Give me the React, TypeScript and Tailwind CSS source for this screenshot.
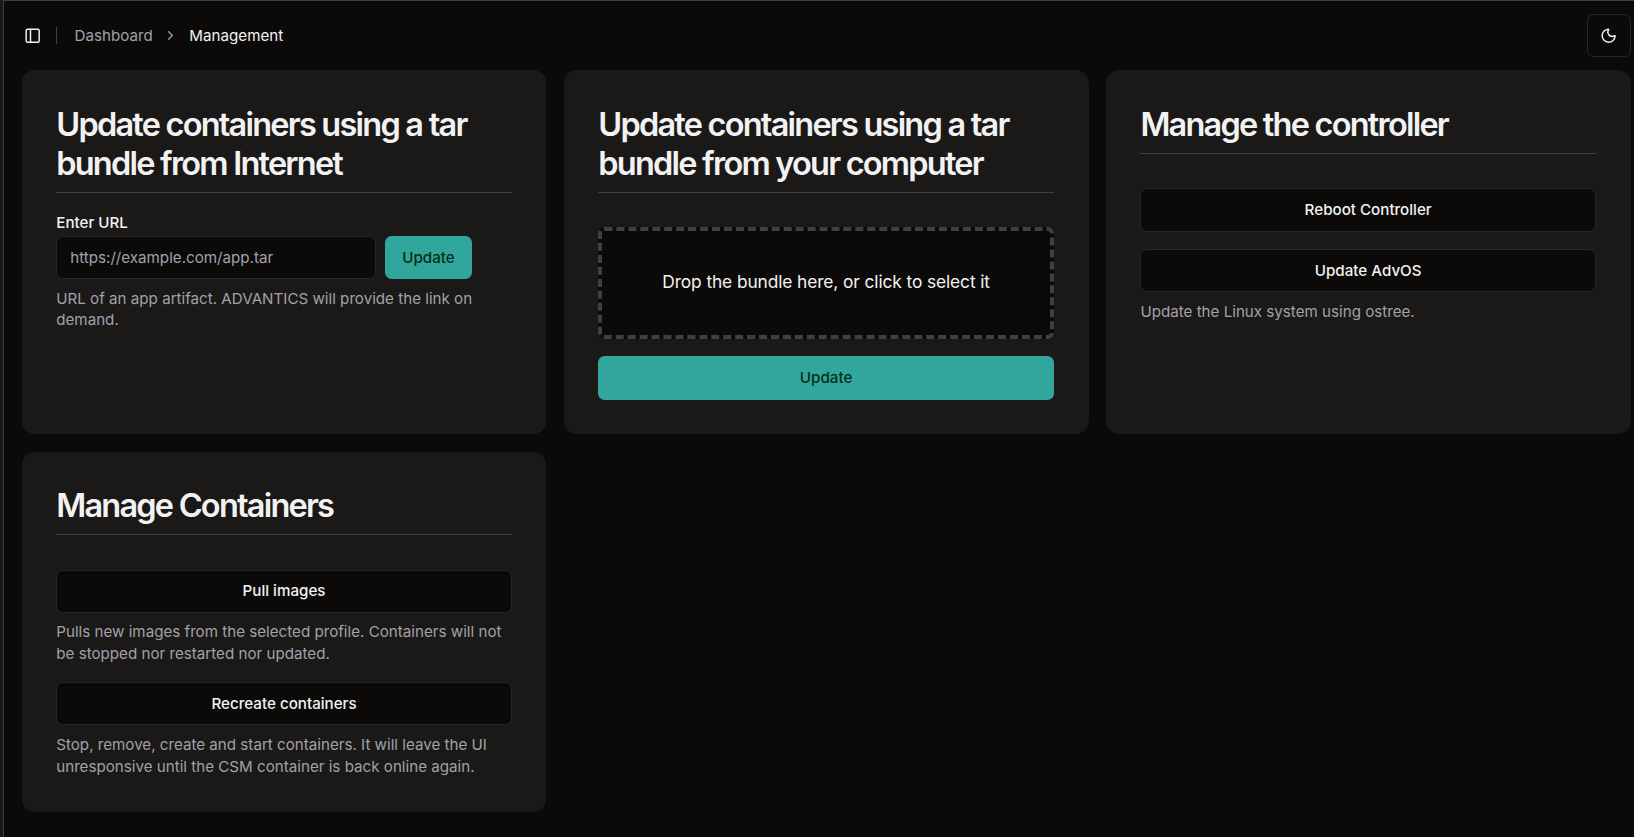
import type { ReactNode } from "react";
import { ChevronRight, Moon, PanelLeft } from "lucide-react";

function Card({ title, children }: { title: string; children: ReactNode }) {
  return (
    <section className="rounded-xl bg-[#1a1917] p-8">
      <h2 className="border-b border-[#3f3f46] pb-2 text-3xl leading-9 font-semibold tracking-[-0.0545em] text-[#f2f2f2]">
        {title}
      </h2>
      {children}
    </section>
  );
}

function OutlineButton({ children }: { children: ReactNode }) {
  return (
    <button className="flex h-10 w-full items-center justify-center rounded-md border border-[#27272a] bg-[#0c0a09] text-sm font-medium text-[#f2f2f2]">
      {children}
    </button>
  );
}

function Description({ children }: { children: ReactNode }) {
  return <p className="text-sm text-[#a1a1aa]">{children}</p>;
}

export default function App() {
  return (
    <>
      <style>{"html { font-size: 17.3333px; background: #0c0a09; }"}</style>
      <div className="flex h-screen overflow-hidden bg-[#18181b] pl-[3px] font-['Inter',sans-serif] text-[#f2f2f2]">
        <main className="flex flex-1 flex-col border-t border-l border-[#3f3f46] bg-[#0c0a09]">
          <header className="flex h-16 shrink-0 items-center justify-between pr-[3.5px] pl-[19.6px]">
            <div className="flex items-center">
              <PanelLeft className="size-4" />
              <div className="ml-[15.1px] h-4 w-px bg-[#3f3f46]" />
              <nav className="ml-[17.6px] flex items-center text-sm">
                <span className="text-[#a1a1aa]">Dashboard</span>
                <ChevronRight className="mr-[11.4px] ml-[10.2px] size-[15px] text-[#a1a1aa]" />
                <span>Management</span>
              </nav>
            </div>
            <button className="flex size-10 items-center justify-center rounded-md border border-[#27272a]">
              <Moon className="size-4" />
            </button>
          </header>
          <div className="grid grid-cols-3 gap-x-[17.2px] gap-y-4 pr-[3.4px] pl-[17.6px]">
            <Card title="Update containers using a tar bundle from Internet">
              <div className="mt-4 flex w-fit max-w-[416px] flex-col">
                <label className="pt-[5px] pb-[5px] text-sm leading-none font-medium">Enter URL</label>
                <div className="mt-[0.6px] flex gap-2">
                  <input
                    className="h-10 w-[320px] rounded-md border border-[#27272a] bg-[#0c0a09] px-3 text-sm placeholder:text-[#a1a1aa]"
                    placeholder="https://example.com/app.tar"
                  />
                  <button className="h-10 rounded-md bg-[#31a69c] px-4 text-sm font-medium text-[#052e16]">
                    Update
                  </button>
                </div>
                <div className="mt-2">
                  <Description>URL of an app artifact. ADVANTICS will provide the link on demand.</Description>
                </div>
              </div>
            </Card>
            <Card title="Update containers using a tar bundle from your computer">
              <div className="mt-8 flex h-[111.6px] items-center justify-center rounded-md border-4 border-dashed border-[#3f3f46] bg-[#0c0a09] pb-[2px] tracking-[-0.1px]">
                Drop the bundle here, or click to select it
              </div>
              <button className="mt-4 h-10 w-full rounded-md bg-[#31a69c] text-sm font-medium text-[#052e16]">
                Update
              </button>
            </Card>
            <Card title="Manage the controller">
              <div className="mt-8 flex flex-col gap-4">
                <OutlineButton>Reboot Controller</OutlineButton>
                <div className="space-y-2">
                  <OutlineButton>Update AdvOS</OutlineButton>
                  <Description>Update the Linux system using ostree.</Description>
                </div>
              </div>
            </Card>
            <Card title="Manage Containers">
              <div className="mt-8 flex flex-col gap-4">
                <div className="space-y-2">
                  <OutlineButton>Pull images</OutlineButton>
                  <Description>
                    Pulls new images from the selected profile. Containers will not be stopped nor restarted nor
                    updated.
                  </Description>
                </div>
                <div className="space-y-2">
                  <OutlineButton>Recreate containers</OutlineButton>
                  <Description>
                    Stop, remove, create and start containers. It will leave the UI unresponsive until the CSM
                    container is back online again.
                  </Description>
                </div>
              </div>
            </Card>
          </div>
        </main>
      </div>
    </>
  );
}
